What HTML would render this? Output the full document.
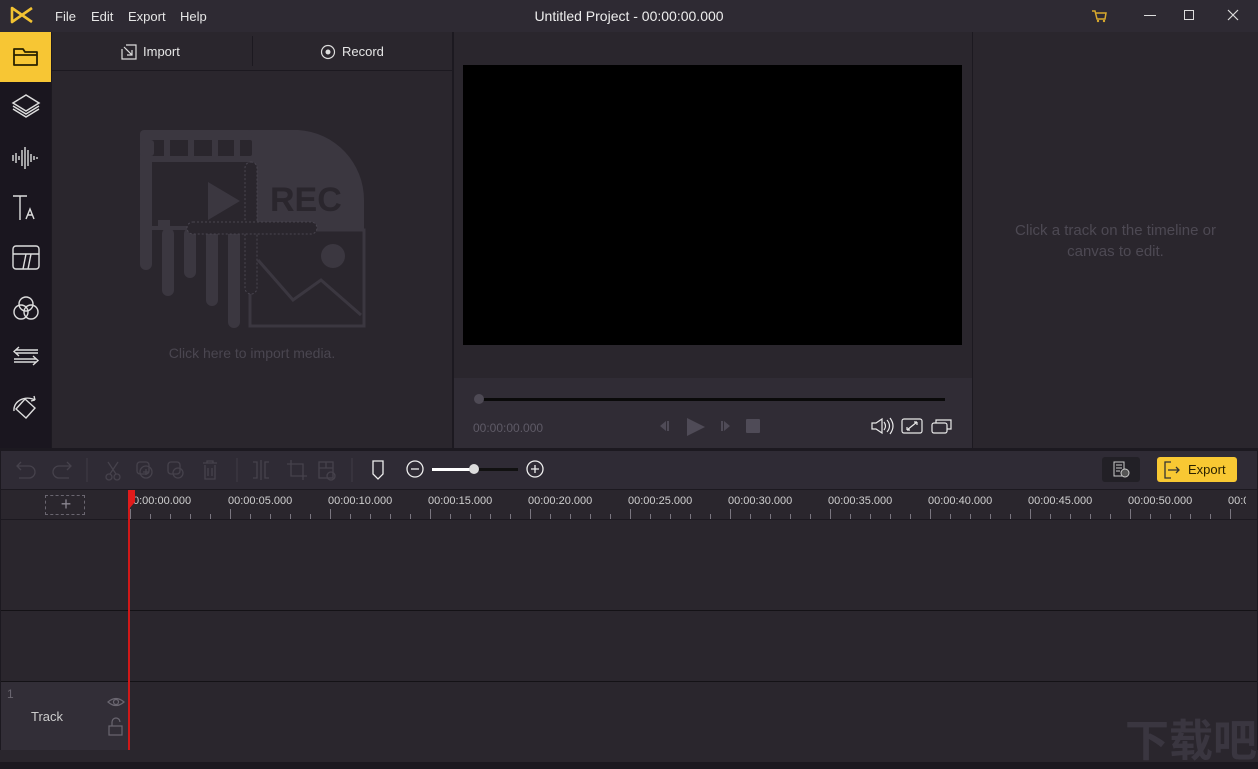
<!DOCTYPE html>
<html><head><meta charset="utf-8"><style>
*{margin:0;padding:0;box-sizing:border-box}
body{width:1258px;height:762px;overflow:hidden;background:#1c1920;font-family:"Liberation Sans",sans-serif;position:relative;color:#ddd}
.a{position:absolute}
.t{font-size:13px;color:#e6e6e6}
.ruler span{position:absolute;top:5px;font-size:11px;color:#cfcfcf}
</style></head><body>
<!-- title bar -->
<div class="a" style="left:0;top:0;width:1258px;height:32px;background:#2e2a33"></div>
<svg class="a" style="left:10px;top:6px" width="24" height="18" viewBox="0 0 24 18"><path d="M2 2 L12 9 L2 16 Z M22 2 L12 9 L22 16" fill="none" stroke="#f2c232" stroke-width="2.6" stroke-linejoin="round"/></svg>
<div class="a t" style="left:55px;top:9px">File</div>
<div class="a t" style="left:91px;top:9px">Edit</div>
<div class="a t" style="left:128px;top:9px">Export</div>
<div class="a t" style="left:180px;top:9px">Help</div>
<div class="a" style="left:0;top:8px;width:1258px;text-align:center;font-size:14px;color:#eee">Untitled Project - 00:00:00.000</div>
<svg class="a" style="left:1091px;top:9px" width="16" height="14"><path d="M1 2h3l2 8h8l1-6H5" fill="none" stroke="#d9a92d" stroke-width="1.5"/><circle cx="7" cy="12" r="1.2" fill="#d9a92d"/><circle cx="13" cy="12" r="1.2" fill="#d9a92d"/></svg>
<div class="a" style="left:1144px;top:15px;width:12px;height:1px;background:#ddd"></div>
<div class="a" style="left:1184px;top:10px;width:10px;height:10px;border:1px solid #ddd"></div>
<svg class="a" style="left:1227px;top:9px" width="12" height="12"><path d="M1 1L11 11M11 1L1 11" stroke="#ddd" stroke-width="1.2"/></svg>
<!-- sidebar -->
<div class="a" style="left:0;top:32px;width:51px;height:416px;background:#1a161f"></div>
<div class="a" style="left:0;top:32px;width:51px;height:50px;background:#f7c634"></div>
<svg class="a" style="left:12px;top:45px" width="28" height="24"><path d="M2 4h9l2 3h12v13H2z M2 10h23" fill="none" stroke="#2a2200" stroke-width="1.8" stroke-linejoin="round"/></svg>
<svg class="a" style="left:11px;top:93px" width="30" height="28" fill="none" stroke="#ddd" stroke-width="1.5"><path d="M15 2L28 10 15 18 2 10z"/><path d="M2 13l13 8 13-8M2 16l13 8 13-8"/></svg>
<svg class="a" style="left:11px;top:145px" width="30" height="26" stroke="#ddd" stroke-width="1.4"><path d="M2 10v6M5 8v10M8 11v4M11 5v16M14 2v22M17 5v16M20 9v8M23 11v4M26 12v2"/></svg>
<svg class="a" style="left:11px;top:194px" width="30" height="28" fill="none" stroke="#ddd" stroke-width="1.4"><path d="M2 2h14M9 2v24"/><path d="M15 25l4-10 4 10M16.5 21h5"/></svg>
<svg class="a" style="left:11px;top:243px" width="30" height="28" fill="none" stroke="#ddd" stroke-width="1.4"><rect x="2" y="3" width="26" height="23" rx="3"/><path d="M2 11h26M15 11l-3 15M20 11l-3 15"/></svg>
<svg class="a" style="left:11px;top:294px" width="30" height="28" fill="none" stroke="#ddd" stroke-width="1.4"><circle cx="15" cy="10" r="7"/><circle cx="10" cy="18" r="7"/><circle cx="20" cy="18" r="7"/></svg>
<svg class="a" style="left:11px;top:344px" width="30" height="26" fill="none" stroke="#ddd" stroke-width="1.4"><path d="M5 6h22M5 9h22M8 3L3 7.5 8 12M3 15h22M3 18h22M22 12l5 4.5-5 4.5"/></svg>
<svg class="a" style="left:11px;top:393px" width="30" height="28" fill="none" stroke="#ddd" stroke-width="1.4"><path d="M14 6l10 9-9 10-10-9z"/><path d="M3 18C2 8 14 2 24 7M24 7l-1-4M24 7l-4 1"/></svg>
<!-- media panel -->
<div class="a" style="left:52px;top:32px;width:400px;height:416px;background:#2a262d"></div>
<div class="a" style="left:52px;top:70px;width:400px;height:1px;background:#1c1920"></div>
<div class="a" style="left:252px;top:36px;width:1px;height:30px;background:#1c1920"></div>
<svg class="a" style="left:121px;top:44px" width="16" height="16" fill="none" stroke="#ddd" stroke-width="1.2"><path d="M1 5V15H15V1H5M3 3l8 8M11 6v5H6"/></svg>
<div class="a t" style="left:143px;top:44px">Import</div>
<svg class="a" style="left:320px;top:44px" width="16" height="16"><circle cx="8" cy="8" r="6.5" fill="none" stroke="#ddd" stroke-width="1.2"/><circle cx="8" cy="8" r="2.5" fill="#ddd"/></svg>
<div class="a t" style="left:342px;top:44px">Record</div>
<svg class="a" style="left:130px;top:120px" width="250" height="220">
<g fill="#3b3740">
<path d="M118 10h50v100H118z"/><path d="M168 10a70 70 0 0 1 66 70v30H168z" />
<rect x="10" y="10" width="112" height="10" rx="4"/>
<path d="M10 14h12v130a6 6 0 0 1-12 0z"/>
<rect x="18" y="20" width="14" height="16" rx="3" fill="#2a262d"/><rect x="42" y="20" width="14" height="16" rx="3" fill="#2a262d"/><rect x="66" y="20" width="14" height="16" rx="3" fill="#2a262d"/><rect x="90" y="20" width="14" height="16" rx="3" fill="#2a262d"/><rect x="112" y="20" width="10" height="16" rx="2" fill="#2a262d"/>
<rect x="10" y="20" width="14" height="16" rx="3"/><rect x="34" y="20" width="6" height="16"/><rect x="58" y="20" width="6" height="16"/><rect x="82" y="20" width="6" height="16"/><rect x="104" y="20" width="6" height="16"/>
<rect x="10" y="36" width="112" height="6"/>
<path d="M78 62l32 19-32 19z"/>
<rect x="32" y="108" width="12" height="68" rx="6"/><rect x="54" y="108" width="12" height="50" rx="6"/><rect x="76" y="108" width="12" height="78" rx="6"/><rect x="98" y="108" width="12" height="100" rx="6"/>
<rect x="10" y="106" width="112" height="4"/>
<rect x="28" y="100" width="12" height="10"/>
</g>
<text x="140" y="91" font-family="Liberation Sans" font-weight="bold" font-size="34" fill="#2a262d">REC</text>
<g fill="none" stroke="#3b3740" stroke-width="3"><path d="M120 110H234V206H120z"/><path d="M128 140l35 40 28-20 40 35"/></g>
<circle cx="203" cy="136" r="12" fill="#3b3740"/>
<g fill="#2a262d" stroke="#4a4650" stroke-width="1" stroke-dasharray="2 2"><rect x="115" y="42" width="12" height="132" rx="6"/><rect x="57" y="102" width="130" height="12" rx="6"/></g>
</svg>
<div class="a" style="left:52px;top:345px;width:400px;text-align:center;font-size:14px;color:#4a4650">Click here to import media.</div>
<!-- splitters -->
<div class="a" style="left:452px;top:32px;width:2px;height:416px;background:#1c1920"></div>
<!-- preview -->
<div class="a" style="left:454px;top:32px;width:518px;height:346px;background:#2a262d"></div>
<div class="a" style="left:463px;top:65px;width:499px;height:280px;background:#000"></div>
<div class="a" style="left:454px;top:378px;width:518px;height:70px;background:#302c35"></div>
<div class="a" style="left:478px;top:398px;width:467px;height:3px;background:#0a0a0a"></div>
<div class="a" style="left:474px;top:394px;width:10px;height:10px;border-radius:5px;background:#4e4a55"></div>
<div class="a" style="left:473px;top:421px;font-size:12px;color:#5e5a66">00:00:00.000</div>
<svg class="a" style="left:658px;top:416px" width="110" height="22" fill="#4f4b57"><path d="M2 10l6-5v10z M9 5h2v10H9z"/><path d="M29 2l18 9-18 9z"/><path d="M63 5h2v10h-2z M66 5l6 5-6 5z"/><rect x="88" y="3" width="14" height="14" rx="1"/></svg>
<svg class="a" style="left:870px;top:417px" width="84" height="18" fill="none" stroke="#e8e8e8" stroke-width="1.2"><path d="M2 6h4l6-4v14l-6-4H2z M14 5q3 4 0 8 M17 3q5 6 0 12 M20 1q6 8 0 16"/><rect x="32" y="2" width="20" height="14" rx="2"/><path d="M37 13l10-8M37 13v-3M37 13h3M47 5h-3M47 5v3"/><rect x="62" y="6" width="15" height="10" rx="2"/><path d="M66 6V3h15v9h-4"/></svg>
<!-- right panel -->
<div class="a" style="left:972px;top:32px;width:1px;height:416px;background:#1c1920"></div>
<div class="a" style="left:973px;top:32px;width:285px;height:416px;background:#2a262d"></div>
<div class="a" style="left:973px;top:220px;width:285px;text-align:center;font-size:15px;line-height:21px;color:#4d4953">Click a track on the timeline or<br>canvas to edit.</div>
<!-- timeline toolbar -->
<div class="a" style="left:0;top:448px;width:1258px;height:3px;background:#1c1920"></div>
<div class="a" style="left:1px;top:451px;width:1256px;height:38px;background:#2f2b35"></div>
<svg class="a" style="left:15px;top:458px" width="340" height="24" fill="none" stroke="#46424c" stroke-width="1.3">
<path d="M6 4L2 8l4 4M2 8h12a6 6 0 0 1 0 12H4"/><path d="M52 4l4 4-4 4M56 8H44a6 6 0 0 0 0 12h10"/>
<path d="M72 0v24M222 0v24M337 0v24" stroke="#3c3842"/>
<path d="M93 4l8 12M103 4l-8 12"/><circle cx="94" cy="19" r="3"/><circle cx="102" cy="19" r="3"/>
<rect x="122" y="4" width="12" height="12" rx="3"/><circle cx="131" cy="14" r="6"/><path d="M131 11v6M128 14h6"/>
<rect x="153" y="4" width="12" height="12" rx="3"/><circle cx="163" cy="15" r="5"/>
<path d="M188 5h14M192 5V3h6v2M190 7v14h10V7M193 10v8M197 10v8"/>
<path d="M238 4h4v16h-4M254 4h-4v16h4M246 2v20"/>
<path d="M276 2v16h16M272 6h16v16"/>
<rect x="304" y="4" width="14" height="16"/><path d="M304 10h14M311 4v6"/><circle cx="316" cy="18" r="4"/>
</svg>
<svg class="a" style="left:370px;top:459px" width="180" height="22" fill="none" stroke="#eee" stroke-width="1.3"><path d="M3 2h10v13l-5 5-5-5z"/><circle cx="45" cy="10" r="8"/><path d="M41 10h8"/><circle cx="165" cy="10" r="8"/><path d="M161 10h8M165 6v8"/></svg>
<div class="a" style="left:432px;top:468px;width:42px;height:3px;background:#fff"></div>
<div class="a" style="left:474px;top:468px;width:44px;height:3px;background:#111"></div>
<div class="a" style="left:469px;top:464px;width:10px;height:10px;border-radius:5px;background:#ddd"></div>
<div class="a" style="left:1102px;top:457px;width:38px;height:25px;border-radius:3px;background:#222026"></div>
<svg class="a" style="left:1113px;top:461px" width="18" height="18" fill="none" stroke="#ccc" stroke-width="1"><rect x="1" y="1" width="10" height="14"/><path d="M3 4h6M3 7h6M3 10h4"/><circle cx="12" cy="12" r="4" fill="#555"/></svg>
<div class="a" style="left:1157px;top:457px;width:80px;height:25px;border-radius:3px;background:#f8c833"></div>
<svg class="a" style="left:1162px;top:460px" width="20" height="20" fill="none" stroke="#333" stroke-width="1.3"><path d="M9 2H3v16h6M6 10h11M14 7l3 3-3 3"/></svg>
<div class="a" style="left:1188px;top:462px;font-size:13px;color:#2a2200">Export</div>
<!-- timeline -->
<div class="a" style="left:0;top:489px;width:1258px;height:1px;background:#1c1920"></div>
<div class="a" style="left:1px;top:490px;width:1256px;height:260px;background:#2a262d"></div>
<div class="a" style="left:45px;top:495px;width:40px;height:20px;border:1px dashed #6a6670"></div>
<div class="a" style="left:56px;top:495px;width:20px;text-align:center;font-size:18px;line-height:19px;color:#8a8690">+</div>
<div class="a ruler" style="left:130px;top:490px;width:1116px;height:30px;overflow:hidden">
<span style="left:3px">0:00:00.000</span><span style="left:98px">00:00:05.000</span><span style="left:198px">00:00:10.000</span><span style="left:298px">00:00:15.000</span><span style="left:398px">00:00:20.000</span><span style="left:498px">00:00:25.000</span><span style="left:598px">00:00:30.000</span><span style="left:698px">00:00:35.000</span><span style="left:798px">00:00:40.000</span><span style="left:898px">00:00:45.000</span><span style="left:998px">00:00:50.000</span><span style="left:1098px">00:0</span>
<div class="a" style="left:0;top:24px;width:1116px;height:5px;background:repeating-linear-gradient(90deg,#7a7680 0 1px,transparent 1px 20px)"></div>
<div class="a" style="left:0;top:19px;width:1116px;height:10px;background:repeating-linear-gradient(90deg,#7a7680 0 1px,transparent 1px 100px)"></div>
<div class="a" style="left:0;top:29px;width:1116px;height:1px;background:#7a7680"></div>
</div>
<div class="a" style="left:1px;top:519px;width:1256px;height:1px;background:#1c1920"></div>
<div class="a" style="left:1px;top:610px;width:1256px;height:1px;background:#141216"></div>
<div class="a" style="left:1px;top:681px;width:1256px;height:1px;background:#141216"></div>
<div class="a" style="left:1px;top:682px;width:128px;height:68px;background:#322e37"></div>
<div class="a" style="left:7px;top:687px;font-size:12px;color:#6a6670">1</div>
<div class="a" style="left:31px;top:709px;font-size:13px;color:#ccc">Track</div>
<svg class="a" style="left:106px;top:696px" width="20" height="40" fill="none" stroke="#6a6670" stroke-width="1.2"><path d="M2 6q8-7 16 0q-8 7-16 0z"/><circle cx="10" cy="6" r="2.5"/><rect x="3" y="30" width="13" height="9"/><path d="M6 30v-4a4 4 0 0 1 8 0"/></svg>
<div class="a" style="left:128px;top:490px;width:2px;height:260px;background:#d01818"></div>
<svg class="a" style="left:128px;top:490px" width="8" height="20"><path d="M0 0h7v12l-7 8z" fill="#e01b1b"/></svg>
<div class="a" style="left:0;top:750px;width:1258px;height:12px;background:#2a262d"></div>
<div class="a" style="left:1125px;top:705px;font-size:44px;font-weight:bold;color:#3a3640;font-family:'Noto Sans CJK SC',sans-serif">下载吧</div>
</body></html>
